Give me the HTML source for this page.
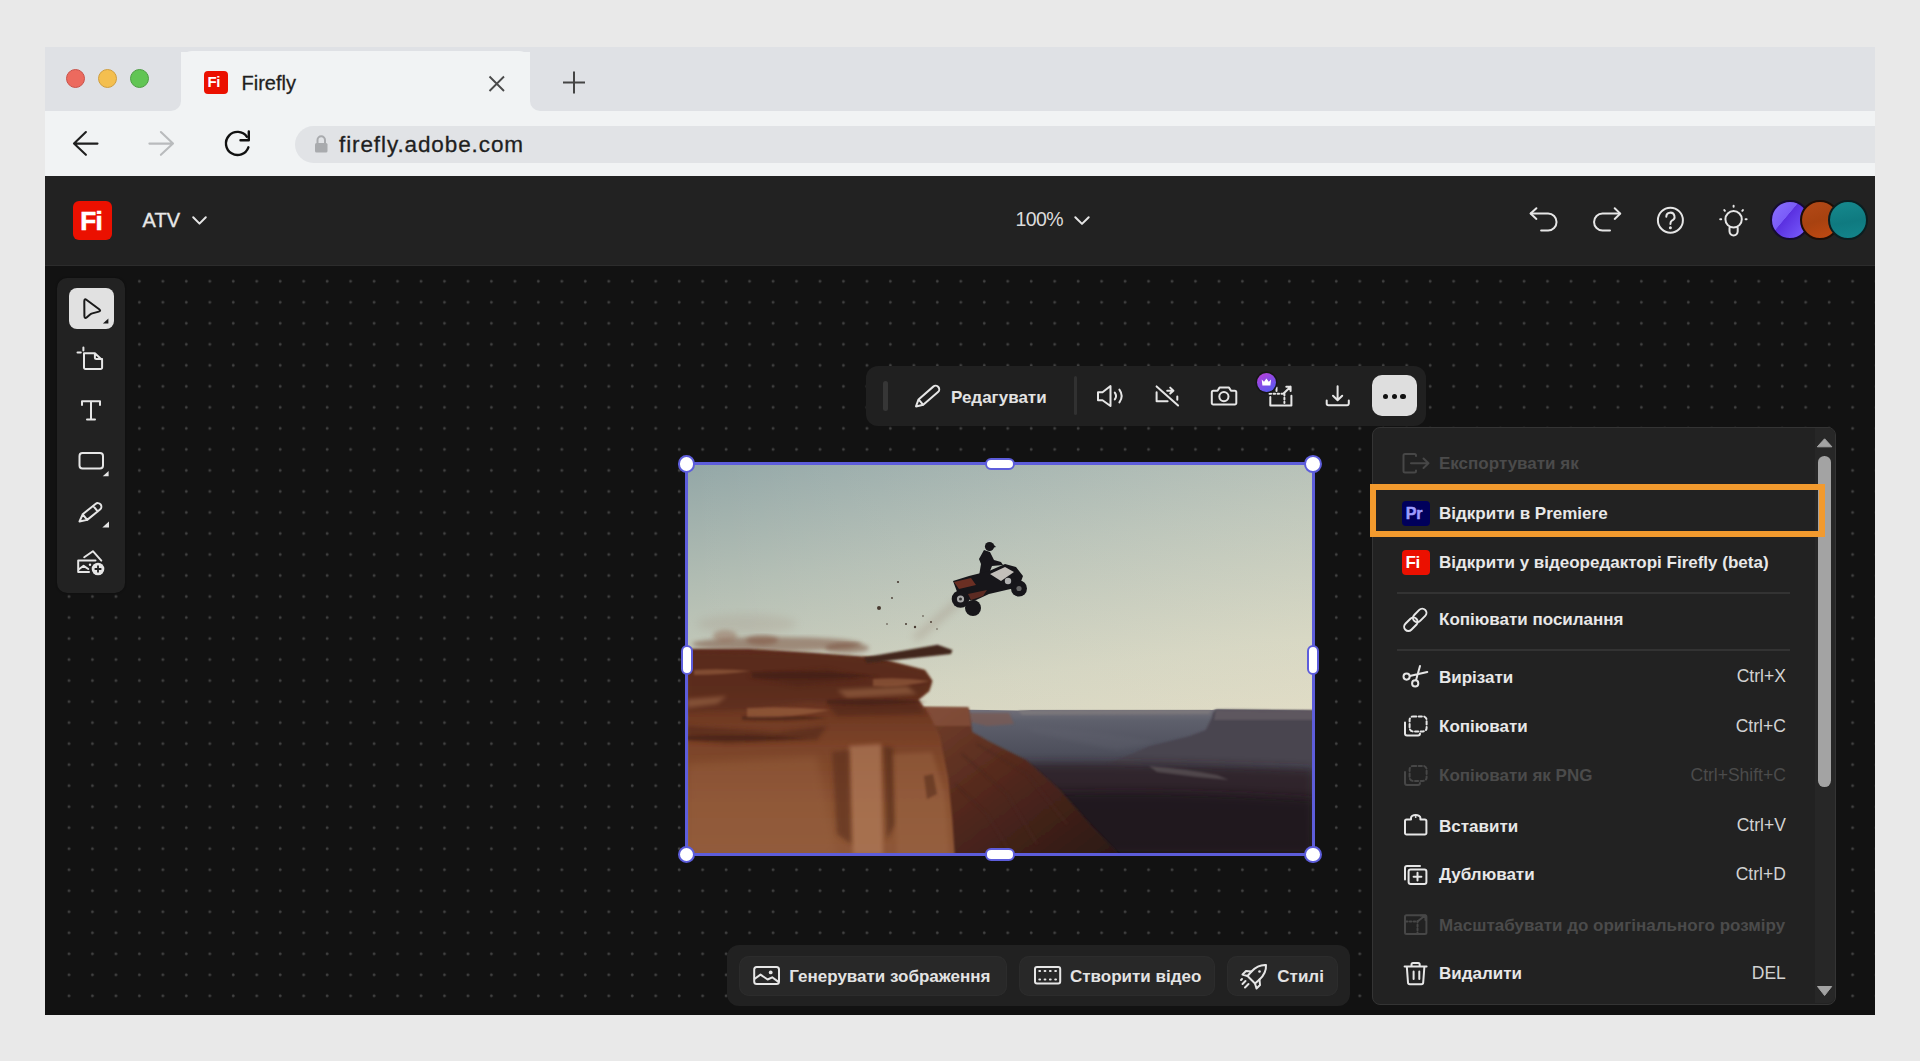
<!DOCTYPE html>
<html><head><meta charset="utf-8">
<style>
*{box-sizing:border-box;margin:0;padding:0}
html,body{width:1920px;height:1061px;overflow:hidden;background:#e9e9e9;font-family:"Liberation Sans",sans-serif;position:relative}
.a{position:absolute}
.t{position:absolute;white-space:nowrap;line-height:1}
svg{position:absolute;overflow:visible}
#canvas{position:absolute;left:45px;top:265.5px;width:1830px;height:749.5px;background-color:#121212;
 background-image:radial-gradient(circle at 12px 10.5px,#484848 0,#3e3e3e 0.9px,rgba(18,18,18,0) 1.9px);
 background-size:23.47px 21.02px;background-position:-11.48px 4.8px}
.mi{position:absolute;left:1439px;font-size:17px;font-weight:bold;color:#e8e8e8;white-space:nowrap;line-height:1}
.sc{position:absolute;right:134.2px;font-size:17.5px;color:#d2d2d2;white-space:nowrap;line-height:1;text-align:right}
.dis{color:#4b4b4b}
.ic{stroke:#e6e6e6;fill:none;stroke-width:2;stroke-linecap:round;stroke-linejoin:round}
.icd{stroke:#474747;fill:none;stroke-width:2;stroke-linecap:round;stroke-linejoin:round}
</style></head>
<body>
<!-- browser tab strip -->
<div class="a" style="left:45px;top:47px;width:1830px;height:64px;background:#f1f3f4"></div>
<div class="a" style="left:45px;top:47px;width:135.5px;height:64px;background:#dfe1e5;border-bottom-right-radius:10px"></div>
<div class="a" style="left:529.5px;top:47px;width:1345.5px;height:64px;background:#dfe1e5;border-bottom-left-radius:10px"></div>
<div class="a" style="left:180.5px;top:47px;width:349px;height:5px;background:#dfe1e5"></div>
<div class="a" style="left:180.5px;top:50.5px;width:349px;height:61px;background:#f1f3f4;border-radius:11px 11px 0 0"></div>
<!-- traffic lights -->
<div class="a" style="left:66.3px;top:68.9px;width:19px;height:19px;border-radius:50%;background:#ec6a5e;border:1.5px solid #c9524a"></div>
<div class="a" style="left:98.1px;top:68.9px;width:19px;height:19px;border-radius:50%;background:#f4bf4f;border:1.5px solid #d09e3e"></div>
<div class="a" style="left:129.9px;top:68.9px;width:19px;height:19px;border-radius:50%;background:#61c554;border:1.5px solid #4e9e44"></div>
<!-- favicon -->
<div class="a" style="left:204px;top:70.5px;width:24px;height:23px;border-radius:4px;background:#eb1000"></div>
<div class="t" style="left:207.5px;top:74px;font-size:15px;font-weight:bold;color:#fff;letter-spacing:-0.5px">Fi</div>
<div class="t" style="left:241.5px;top:73.1px;font-size:20px;color:#1f1f1f;-webkit-text-stroke:0.3px #1f1f1f">Firefly</div>
<svg style="left:0;top:0" width="1" height="1"><path d="M489.5 76.5 L504 91 M504 76.5 L489.5 91" stroke="#4a4a4a" stroke-width="1.9" fill="none"/></svg>
<svg style="left:0;top:0" width="1" height="1"><path d="M574 71.5 V93.5 M563 82.5 H585" stroke="#444" stroke-width="2" fill="none"/></svg>
<!-- toolbar -->
<div class="a" style="left:45px;top:111px;width:1830px;height:65px;background:#f1f3f4"></div>
<div class="a" style="left:295.4px;top:125.5px;width:1579.6px;height:37.5px;background:#e1e3e6;border-radius:19px 0 0 19px"></div>
<svg style="left:0;top:0" width="1" height="1">
 <path d="M97.5 143.6 H74 M85.9 132 L74 143.6 L85.9 154.8" stroke="#1f1f1f" stroke-width="2.1" fill="none" stroke-linecap="round" stroke-linejoin="round"/>
 <path d="M149.4 143.6 H173 M160.9 132 L173 143.6 L160.9 154.8" stroke="#b9bbbd" stroke-width="2.1" fill="none" stroke-linecap="round" stroke-linejoin="round"/>
 <path d="M248.4 147.3 A11.55 11.55 0 1 1 246.9 136.7" stroke="#111" stroke-width="2.4" fill="none" stroke-linecap="round"/>
 <path d="M248.8 131.5 V140.2 H240.5" stroke="#111" stroke-width="2.4" fill="none" stroke-linecap="round" stroke-linejoin="round"/>
 <rect x="315" y="143" width="12.5" height="9.5" rx="1.5" fill="#a9abae"/>
 <path d="M317.5 143 V140 A3.75 3.75 0 0 1 325 140 V143" stroke="#a9abae" stroke-width="2" fill="none"/>
</svg>
<div class="t" style="left:339px;top:134.2px;font-size:22.5px;color:#1f1f1f;letter-spacing:0.9px;-webkit-text-stroke:0.3px #1f1f1f">firefly.adobe.com</div>
<!-- app header -->
<div class="a" style="left:45px;top:176px;width:1830px;height:89.5px;background:#222222"></div>
<div class="a" style="left:73px;top:201px;width:38.5px;height:39px;border-radius:6px;background:#eb1000"></div>
<div class="t" style="left:80.3px;top:207.6px;font-size:26px;font-weight:bold;color:#fff;letter-spacing:-0.8px;-webkit-text-stroke:0.6px #fff">Fi</div>
<div class="t" style="left:142.6px;top:209.5px;font-size:20px;color:#e8e8e8;-webkit-text-stroke:0.35px #e8e8e8">ATV</div>
<svg style="left:0;top:0" width="1" height="1">
 <path d="M193.2 217.2 L199.5 223.6 L205.8 217.2" class="ic" stroke-width="2.7"/>
 <path d="M1075.3 217.2 L1082 223.9 L1088.7 217.2" class="ic" stroke-width="2.7"/>
</svg>
<div class="t" style="left:1015.5px;top:210.3px;font-size:19.5px;color:#dcdcdc;letter-spacing:-0.6px">100%</div>
<!-- header right icons -->
<svg style="left:0;top:0" width="1" height="1">
 <path d="M1530.8 213.6 H1548.1 A8.45 8.45 0 0 1 1548.1 230.5 H1541.1" class="ic" stroke-width="2.7"/>
 <path d="M1536.4 208.2 L1530.6 213.6 L1536.4 218.9" class="ic" stroke-width="2.7"/>
 <path d="M1619.8 213.6 H1602.5 A8.45 8.45 0 0 0 1602.5 230.5 H1610" class="ic" stroke-width="2.7"/>
 <path d="M1614.7 208.2 L1620.3 213.6 L1614.7 218.9" class="ic" stroke-width="2.7"/>
 <circle cx="1670.4" cy="220.2" r="12.5" class="ic" stroke-width="2.6"/>
 <path d="M1666.3 216.8 A4.1 4.1 0 1 1 1671.8 220.6 Q1670.4 221.5 1670.4 224" class="ic" stroke-width="2.5"/>
 <circle cx="1670.4" cy="227.8" r="1.5" fill="#e6e6e6"/>
 <circle cx="1733.6" cy="219.3" r="8.2" class="ic" stroke-width="2.6"/>
 <path d="M1729.5 227.8 V231.3 A4.1 4.1 0 0 0 1737.7 231.3 V227.8" class="ic" stroke-width="2.6"/>
 <path d="M1733.6 205.8 V206.8 M1724.3 210.1 L1724.9 210.8 M1742.9 210.1 L1742.3 210.8 M1720.2 219.3 H1721.2 M1746.6 219.3 H1745.6" class="ic" stroke-width="2.8"/>
</svg>
<!-- avatars -->
<div class="a" style="left:1770px;top:200px;width:40px;height:40px;border-radius:50%;background:linear-gradient(130deg,#8a70ff 0%,#7a5cf8 40%,#5a30e0 41%,#6a48f0 70%,#7f62ff 100%);border:2px solid #150c30"></div>
<div class="a" style="left:1800px;top:200px;width:40px;height:40px;border-radius:50%;background:linear-gradient(160deg,#b44a18,#a84210 50%,#c24a12);border:2px solid #1e0e06"></div>
<div class="a" style="left:1828px;top:200px;width:40px;height:40px;border-radius:50%;background:linear-gradient(170deg,#168a8e 0%,#0f7a80 55%,#13868c 100%);border:2px solid #0b1e20"></div>
<!-- canvas -->
<div id="canvas"></div>
<div class="a" style="left:45px;top:265.5px;width:3px;height:749.5px;background:#121212"></div>
<div class="a" style="left:45px;top:265px;width:1830px;height:1px;background:#2c2c2c"></div>
<div class="a" style="left:45px;top:1010px;width:1830px;height:5px;background:#0f0f0f"></div>
<!-- left toolbar -->
<div class="a" style="left:57.2px;top:278.3px;width:68px;height:314.4px;background:#222222;border-radius:10px;box-shadow:0 0 2px #0c0c0c"></div>
<div class="a" style="left:68.5px;top:288px;width:45px;height:40.7px;background:#e1e1e1;border-radius:8px"></div>
<svg style="left:0;top:0" width="1" height="1">
 <path d="M84.3 301.2 Q84.3 298.3 86.7 300 L99.2 309.3 Q101.3 310.9 98.8 311.6 L92.3 313.4 Q90.9 313.8 89.8 314.7 L86.9 317.2 Q84.5 319.2 84.4 316 Z" stroke="#1a1a1a" stroke-width="2" fill="none" stroke-linejoin="round"/>
 <path d="M102.9 323.6 L108.4 318.5 V323.6 Z" fill="#1a1a1a"/>
 <path d="M83.4 347.4 V350.6 M77.5 352.5 H80.8" class="ic" stroke-width="1.9"/>
 <path d="M84 353.3 H94.9 L102.1 359.9 V367.6 A1.5 1.5 0 0 1 100.6 369.1 H85.5 A1.5 1.5 0 0 1 84 367.6 Z M94.9 353.3 V357.6 A1.5 1.5 0 0 0 96.4 359.1 H102.1" class="ic" stroke-width="1.9"/>
 <path d="M82 404.9 V401.2 H100 V404.9 M91 401.2 V419.5 M87 419.5 H95" class="ic" stroke-width="1.9"/>
 <rect x="79.5" y="453" width="23.5" height="15.5" rx="3" class="ic" stroke-width="1.9"/>
 <path d="M102.7 476.2 L108.6 471.1 V476.2 Z" fill="#e6e6e6"/>
 <g transform="translate(79.5 521.5) rotate(-39)">
  <path d="M0 0 L7 -3.6 H23.5 A3.6 3.6 0 0 1 23.5 3.6 H7 Z M7 -3.6 V3.6 M20.5 -3.6 V3.6" class="ic" stroke-width="1.9"/>
 </g>
 <path d="M102.3 527.4 L109 521.4 V527.4 Z" fill="#e6e6e6"/>
 <path d="M84.2 557.3 L92.9 551.2 L101.3 560.6" class="ic" stroke-width="1.9"/>
 <path d="M95.5 560.6 H78.2 V571.9 H89" class="ic" stroke-width="1.9"/>
 <path d="M78.9 569.2 L83.6 565.8 L88.3 569" class="ic" stroke-width="1.9"/>
 <circle cx="90" cy="564.7" r="1.2" fill="#e6e6e6"/>
 <circle cx="98" cy="569" r="6.3" fill="#e6e6e6"/>
 <path d="M98 565.6 V572.4 M94.6 569 H101.4" stroke="#222" stroke-width="1.8"/>
</svg>
<!-- photo -->
<svg style="left:686.6px;top:464px;overflow:hidden" width="626.4" height="390.5" viewBox="0 0 626.4 390.5" preserveAspectRatio="none">
 <defs>
  <linearGradient id="sky" x1="0" y1="0" x2="0.2" y2="1">
   <stop offset="0" stop-color="#93a7a7"/>
   <stop offset="0.3" stop-color="#b2bdb3"/>
   <stop offset="0.62" stop-color="#d0d1bd"/>
   <stop offset="0.9" stop-color="#e0d9c0"/>
   <stop offset="1" stop-color="#e4d0b0"/>
  </linearGradient>
  <linearGradient id="skyR" x1="0" y1="0" x2="1" y2="0">
   <stop offset="0" stop-color="#fff" stop-opacity="0"/>
   <stop offset="1" stop-color="#f4f0dc" stop-opacity="0.22"/>
  </linearGradient>
  <linearGradient id="cliff" x1="0" y1="0" x2="0" y2="1">
   <stop offset="0" stop-color="#5e2c1a"/>
   <stop offset="0.2" stop-color="#64301e"/>
   <stop offset="0.45" stop-color="#7a4228"/>
   <stop offset="0.75" stop-color="#8a5232"/>
   <stop offset="1" stop-color="#8e5838"/>
  </linearGradient>
  <linearGradient id="dist" x1="0" y1="0" x2="0" y2="1">
   <stop offset="0" stop-color="#74717a"/>
   <stop offset="0.08" stop-color="#5e606c"/>
   <stop offset="0.35" stop-color="#4a4b58"/>
   <stop offset="0.6" stop-color="#3c3540"/>
   <stop offset="1" stop-color="#2f2322"/>
  </linearGradient>
  <linearGradient id="slope" x1="0" y1="0" x2="1" y2="1">
   <stop offset="0" stop-color="#74402c"/>
   <stop offset="0.45" stop-color="#52281c"/>
   <stop offset="1" stop-color="#2a1816"/>
  </linearGradient>
  <filter id="b1" x="-10%" y="-10%" width="120%" height="120%"><feGaussianBlur stdDeviation="1"/></filter>
  <filter id="b2" x="-20%" y="-20%" width="140%" height="140%"><feGaussianBlur stdDeviation="2.2"/></filter>
  <filter id="b3" x="-30%" y="-30%" width="160%" height="160%"><feGaussianBlur stdDeviation="4"/></filter>
 </defs>
 <rect x="0" y="0" width="626.4" height="391" fill="url(#sky)"/>
 <rect x="0" y="0" width="626.4" height="250" fill="url(#skyR)"/>
 <!-- distant range + valley -->
 <path d="M236 245 L331 246.5 L345 246 L524.7 246 L528.7 245.5 L626.4 246.5 V391 H236 Z" fill="url(#dist)"/>
 <path d="M331 246.5 L524.7 246 L522 250 L335 251 Z" fill="#85807f" opacity="0.55" filter="url(#b1)"/>
 <path d="M524.7 254 Q526 246 530 245.5 L626.4 246.5 V300 L420 300 L462.8 282 L502.7 272 L518.7 266 Z" fill="#4a4550" filter="url(#b1)"/>
 <path d="M528.7 246 L626.4 246.5 V256 L527 256 Z" fill="#675f66" opacity="0.7" filter="url(#b1)"/>
 <path d="M340 262 Q420 268 470 278 L430 286 Q380 276 345 268 Z" fill="#62646f" opacity="0.3" filter="url(#b2)"/>
 <path d="M290 300 Q420 296 626.4 305 V391 H290 Z" fill="#2a1e20" opacity="0.75" filter="url(#b3)"/>
 <path d="M462 302 Q500 305 530 311 L542 316 Q505 313 470 308 Z" fill="#7e7878" opacity="0.4" filter="url(#b1)"/>
 <path d="M340 330 Q480 325 626.4 335 V391 H340 Z" fill="#1e161a" opacity="0.75" filter="url(#b3)"/>
 <!-- second mesa -->
 <path d="M281 249 L322 249 L327 260 L300 262 L283 258 Z" fill="#7a5a52" opacity="0.75" filter="url(#b1)"/>
 <!-- near mesa & slope -->
 <path d="M236 243 L281.4 243.4 L285.3 267.9 L303 278 L339 296 L373 326 L403 360 L433 391 H236 Z" fill="url(#slope)" filter="url(#b1)"/>
 <path d="M238 243 L281.4 243.4 L284 262 L240 262 Z" fill="#8a5440" opacity="0.65" filter="url(#b1)"/>
 <g stroke="#4a2820" stroke-width="2.5" opacity="0.45" fill="none" filter="url(#b1)">
  <path d="M275 290 L320 330 L350 380"/><path d="M268 320 L300 350 L325 391"/><path d="M290 280 L340 310 L380 360"/>
 </g>
 <!-- dust haze -->
 <ellipse cx="90" cy="180" rx="85" ry="7" fill="#6e3e2a" opacity="0.45" filter="url(#b2)"/>
 <ellipse cx="38" cy="172" rx="12" ry="6" fill="#8a5a44" opacity="0.4" filter="url(#b2)"/>
 <ellipse cx="75" cy="176" rx="16" ry="5" fill="#7a4a34" opacity="0.45" filter="url(#b2)"/>
 <ellipse cx="160" cy="184" rx="22" ry="5" fill="#6a3a28" opacity="0.45" filter="url(#b2)"/>
 <ellipse cx="60" cy="160" rx="50" ry="10" fill="#9a8070" opacity="0.18" filter="url(#b3)"/>
 <!-- cliff -->
 <path d="M0 184 L3.6 185 L62.7 185 L126 189 L189.4 193.4 L237.9 206 L245.4 216.7 L242.2 227.2 L231.6 235.7 L242 250 L252.7 271.5 L261.2 313.8 L265.4 356 L267.7 391 H0 Z" fill="url(#cliff)" filter="url(#b1)"/>
 <path d="M0 186 L126 190 L189 195 L238 208 L244 220 L232 234 L180 242 L120 238 L60 246 L0 248 Z" fill="#552a1a" opacity="0.5" filter="url(#b2)"/>
 <g fill="#4a2418" opacity="0.5" filter="url(#b2)">
  <path d="M60 212 L140 205 L180 215 L110 222 Z"/>
  <path d="M140 240 L230 236 L238 250 L150 252 Z"/>
  <path d="M0 262 L90 268 L140 262 L130 276 L40 280 L0 276 Z"/>
 </g>
 <g fill="#b07a54" opacity="0.45" filter="url(#b2)">
  <path d="M0 235 L40 232 L30 240 L0 244 Z"/>
  <path d="M150 226 L220 222 L230 230 L160 234 Z"/>
 </g>
 <g fill="#3e1c12" opacity="0.5" filter="url(#b1)">
  <path d="M65 208 Q130 206 193 212 Q130 216 65 214 Z"/>
  <path d="M140 236 Q190 233 240 238 Q190 242 140 240 Z"/>
  <path d="M55 252 Q100 250 140 254 Q100 258 55 256 Z"/>
  <path d="M0 272 Q60 270 120 274 Q60 278 0 276 Z"/>
 </g>
 <g fill="#b0744e" opacity="0.45" filter="url(#b1)">
  <path d="M7 206 Q35 204 64 207 Q35 211 7 211 Z"/>
  <path d="M186 215 Q215 213 243 217 Q215 224 186 222 Z"/>
  <path d="M60 244 Q100 242 143 246 Q100 255 60 253 Z"/>
 </g>
 <path d="M0 300 L130 292 L150 391 H0 Z" fill="#9a6442" opacity="0.4" filter="url(#b3)"/>
 <path d="M162 282 L194 280 L196 391 H166 Z" fill="#b88260" opacity="0.6" filter="url(#b2)"/>
 <path d="M145 288 L162 286 L164 380 L150 370 Z" fill="#5a2e1e" opacity="0.6" filter="url(#b2)"/>
 <path d="M197 282 L206 284 L208 360 L200 376 Z" fill="#4e2818" opacity="0.55" filter="url(#b2)"/>
 <path d="M206 290 L245 288 L258 330 L262 391 H210 Z" fill="#a06a48" opacity="0.4" filter="url(#b2)"/>
 <path d="M237 312 L246 310 L250 330 L240 335 Z" fill="#4e2818" opacity="0.5" filter="url(#b1)"/>
 <!-- ramp -->
 <path d="M176.7 193.4 L250.6 180.8 L265.4 186 L264 190 L180 199 Z" fill="#43261d" filter="url(#b1)"/>
 <!-- debris -->
 <g fill="#3a2a22" opacity="0.9">
  <circle cx="192" cy="144" r="2"/><circle cx="211" cy="118" r="1.1"/><circle cx="205" cy="134" r="0.9"/><circle cx="219" cy="160" r="1"/><circle cx="228" cy="163" r="1.2"/><circle cx="244" cy="158" r="1"/><circle cx="236" cy="152" r="0.8"/><circle cx="200" cy="160" r="0.8"/><circle cx="250" cy="165" r="0.7"/>
 </g>
 <path d="M228 175 Q248 158 272 137" stroke="#8a7060" stroke-width="6" opacity="0.3" fill="none" filter="url(#b3)"/>
 <!-- ATV -->
 <g fill="#17161a">
  <circle cx="302.5" cy="82.5" r="4.6"/>
  <path d="M306 80 L309 83 L305 84 Z"/>
  <path d="M297 86 L303 88 L307 96 L314 98 L316 101 L305 102 L301 112 L297 114 L292 112 L294 100 L292 95 Z"/>
  <path d="M266 117 L282 112 L302 107 L318 100 L329 103 L336 112 L332 123 L302 130 L287 137 L272 133 Z"/>
  <circle cx="273.5" cy="135" r="8.8"/>
  <circle cx="286" cy="144" r="8"/>
  <circle cx="321" cy="117" r="8"/>
  <circle cx="332" cy="124.5" r="8"/>
 </g>
 <path d="M303 110 L318 103 L327 108 L314 117 Z" fill="#d6d2cc" opacity="0.9"/>
 <path d="M267 118 L284 114 L289 121 L272 125 Z" fill="#7a3426" opacity="0.85"/>
 <path d="M281 130 L300 126 L296 132 L284 136 Z" fill="#8a3a2a" opacity="0.6"/>
 <circle cx="273.5" cy="135" r="3.6" fill="#a8a8a8"/>
 <circle cx="273.5" cy="135" r="1.5" fill="#333"/>
 <circle cx="321" cy="117" r="3.2" fill="#b0b0b0"/>
 <circle cx="332" cy="124.5" r="2.6" fill="#666"/>
</svg>
<!-- selection frame -->
<div class="a" style="left:685px;top:462.4px;width:629.6px;height:393.7px;border:3.2px solid #5d5ddb"></div>
<div class="a" style="left:677.7px;top:455px;width:17.8px;height:17.8px;border-radius:50%;background:#fff;border:2.8px solid #5d5ddb"></div>
<div class="a" style="left:1304.1px;top:455px;width:17.8px;height:17.8px;border-radius:50%;background:#fff;border:2.8px solid #5d5ddb"></div>
<div class="a" style="left:677.7px;top:845.6px;width:17.8px;height:17.8px;border-radius:50%;background:#fff;border:2.8px solid #5d5ddb"></div>
<div class="a" style="left:1304.1px;top:845.6px;width:17.8px;height:17.8px;border-radius:50%;background:#fff;border:2.8px solid #5d5ddb"></div>
<div class="a" style="left:984.9px;top:457.9px;width:30.3px;height:12.2px;border-radius:6.1px;background:#fff;border:2.8px solid #5d5ddb"></div>
<div class="a" style="left:984.9px;top:848.4px;width:30.3px;height:12.2px;border-radius:6.1px;background:#fff;border:2.8px solid #5d5ddb"></div>
<div class="a" style="left:680.5px;top:644.8px;width:12.2px;height:30.3px;border-radius:6.1px;background:#fff;border:2.8px solid #5d5ddb"></div>
<div class="a" style="left:1306.9px;top:644.8px;width:12.2px;height:30.3px;border-radius:6.1px;background:#fff;border:2.8px solid #5d5ddb"></div>
<!-- floating toolbar -->
<div class="a" style="left:865.8px;top:366.3px;width:560px;height:59.8px;background:#202020;border-radius:12px"></div>
<div class="a" style="left:882.5px;top:381px;width:5px;height:30px;background:#363636;border-radius:2.5px"></div>
<div class="a" style="left:1073.6px;top:376.2px;width:3px;height:39px;background:#313131;border-radius:1.5px"></div>
<div class="t" style="left:951px;top:388.6px;font-size:17px;font-weight:bold;color:#e3e3e3">Редагувати</div>
<svg style="left:0;top:0" width="1" height="1">
 <g transform="translate(916 406.4) rotate(-41)">
  <path d="M0 0 L6.5 -3.6 H26 A3.6 3.6 0 0 1 26 3.6 H6.5 Z M6.5 -3.6 V3.6" class="ic" stroke-width="1.9"/>
 </g>
 <path d="M1098 392.3 H1102.5 L1110.5 386 V406 L1102.5 400.3 H1098 Z" class="ic" stroke-width="1.9"/>
 <path d="M1114.8 392.6 Q1117.3 396 1114.8 399.4 M1119.4 389.6 Q1124 396 1119.4 402.4" class="ic" stroke-width="1.9"/>
 <path d="M1156.6 386.4 L1178.1 405.5 M1156.6 392.3 V401.3 H1167.6 M1167.2 390.7 H1173.4 M1170.2 387.6 L1173.4 390.7 L1170.2 393.6 M1177.3 396.4 V399.7" class="ic" stroke-width="1.9"/>
 <path d="M1211.8 392.2 A1.5 1.5 0 0 1 1213.3 390.7 H1217.5 L1219.5 387.6 H1229 L1231 390.7 H1234.8 A1.5 1.5 0 0 1 1236.3 392.2 V403 A1.5 1.5 0 0 1 1234.8 404.5 H1213.3 A1.5 1.5 0 0 1 1211.8 403 Z" class="ic" stroke-width="1.9"/>
 <circle cx="1223.9" cy="396.6" r="4.6" class="ic" stroke-width="1.9"/>
 <path d="M1270.3 397 V405.5 H1291.4 V395.8" class="ic" stroke-width="1.9"/>
 <path d="M1269.5 393.8 H1282.5 M1284.4 393.8 V403" class="ic" stroke-width="1.9" stroke-dasharray="1.6 2.4"/>
 <path d="M1283.8 393.2 L1290.6 386.8 M1286.3 386.8 H1290.6 V391" class="ic" stroke-width="1.9"/>
 <path d="M1276.5 387.5 V391" class="ic" stroke-width="1.9"/>
 <path d="M1326.7 400.4 V403.5 A1.7 1.7 0 0 0 1328.4 405.2 H1347.1 A1.7 1.7 0 0 0 1348.8 403.5 V400.4 M1337.6 386.3 V400 M1333 395.8 L1337.6 400.2 L1342.2 395.8" class="ic" stroke-width="1.9"/>
</svg>
<div class="a" style="left:1256.6px;top:372.7px;width:19.6px;height:19.6px;border-radius:50%;background:linear-gradient(150deg,#c03fd8 0%,#8a4be6 45%,#4a5ef2 100%);box-shadow:0 0 0 1.5px #161616"></div>
<svg style="left:0;top:0" width="1" height="1">
 <path d="M1261.7 379.6 L1264 381.8 L1266.4 378.6 L1268.8 381.8 L1271.1 379.6 L1270.4 385.6 H1262.4 Z" fill="#fff"/>
</svg>
<div class="a" style="left:1371.7px;top:375.4px;width:45.3px;height:41px;background:#dedede;border-radius:10px"></div>
<div class="a" style="left:1383.2px;top:393.5px;width:5.2px;height:5.2px;border-radius:50%;background:#111"></div>
<div class="a" style="left:1391.8px;top:393.5px;width:5.2px;height:5.2px;border-radius:50%;background:#111"></div>
<div class="a" style="left:1400.4px;top:393.5px;width:5.2px;height:5.2px;border-radius:50%;background:#111"></div>
<!-- context menu -->
<div class="a" style="left:1372.3px;top:427.1px;width:463.8px;height:577.5px;background:#222222;border:1px solid #343434;border-radius:8px"></div>
<div class="a" style="left:1814.8px;top:428.2px;width:20.2px;height:575.3px;background:#272727;border-radius:0 7px 7px 0"></div>
<svg style="left:0;top:0" width="1" height="1">
 <path d="M1817.3 446.8 L1824.6 438.8 L1831.9 446.8 Z" fill="#a3a3a3" stroke="#a3a3a3" stroke-width="1" stroke-linejoin="round"/>
 <path d="M1817.5 986.5 L1824.6 995.5 L1831.7 986.5 Z" fill="#a3a3a3" stroke="#a3a3a3" stroke-width="1" stroke-linejoin="round"/>
</svg>
<div class="a" style="left:1818.2px;top:455.8px;width:12.8px;height:331.6px;background:#a3a3a3;border-radius:6.4px"></div>
<div class="a" style="left:1397px;top:592px;width:393px;height:2px;background:#333"></div>
<div class="a" style="left:1397px;top:648.7px;width:393px;height:2px;background:#333"></div>
<div class="mi dis" style="top:455.4px">Експортувати як</div>
<div class="mi" style="top:505.1px">Відкрити в Premiere</div>
<div class="mi" style="top:553.6px">Відкрити у відеоредакторі Firefly (beta)</div>
<div class="mi" style="top:611.1px">Копіювати посилання</div>
<div class="mi" style="top:668.6px">Вирізати</div>
<div class="sc" style="top:668.2px">Ctrl+X</div>
<div class="mi" style="top:718.1px">Копіювати</div>
<div class="sc" style="top:717.7px">Ctrl+C</div>
<div class="mi dis" style="top:767.3px">Копіювати як PNG</div>
<div class="sc dis" style="top:766.9px">Ctrl+Shift+C</div>
<div class="mi" style="top:817.6px">Вставити</div>
<div class="sc" style="top:817.2px">Ctrl+V</div>
<div class="mi" style="top:866.3px">Дублювати</div>
<div class="sc" style="top:865.9px">Ctrl+D</div>
<div class="mi dis" style="top:917.2px">Масштабувати до оригінального розміру</div>
<div class="mi" style="top:965.4px">Видалити</div>
<div class="sc" style="top:965.0px">DEL</div>
<div class="a" style="left:1370.2px;top:483.8px;width:455.1px;height:53.1px;border:6.6px solid #f29a2e"></div>
<div class="a" style="left:1402px;top:500.5px;width:27.6px;height:25.3px;background:#00005b;border-radius:4px"></div>
<div class="t" style="left:1405.8px;top:505.5px;font-size:16px;font-weight:bold;color:#9d9dff;letter-spacing:-0.2px;-webkit-text-stroke:0.5px #9d9dff">Pr</div>
<div class="a" style="left:1401.6px;top:549.9px;width:28.2px;height:24.7px;background:#eb1000;border-radius:4px"></div>
<div class="t" style="left:1405.6px;top:554px;font-size:17px;font-weight:bold;color:#fff;letter-spacing:-0.6px">Fi</div>
<svg style="left:0;top:0" width="1" height="1">
 <path d="M1416 456 V455.5 A1.5 1.5 0 0 0 1414.5 454 H1405 A1.5 1.5 0 0 0 1403.5 455.5 V471 A1.5 1.5 0 0 0 1405 472.5 H1414.5 A1.5 1.5 0 0 0 1416 471 V470.5 M1411 463.3 H1428.5 M1423.5 458.5 L1428.5 463.3 L1423.5 468" class="icd" stroke-width="1.9"/>
 <g transform="translate(1415.3 619.8) rotate(-45)" class="ic" stroke-width="1.9"><rect x="-14" y="-4.2" width="15.5" height="8.4" rx="4.2"/><rect x="-1.5" y="-4.2" width="15.5" height="8.4" rx="4.2"/></g>
 <circle cx="1406.6" cy="676.6" r="3.1" class="ic" stroke-width="1.9"/>
 <circle cx="1415.2" cy="683.4" r="3.1" class="ic" stroke-width="1.9"/>
 <path d="M1409.7 675.9 L1427.3 672 M1416 680.2 L1420 666" class="ic" stroke-width="1.9"/>
 <rect x="1409.6" y="716.4" width="17" height="15" rx="3.5" class="ic" stroke-width="1.9" stroke-dasharray="3.2 2.4"/>
 <path d="M1405 722.5 V733.5 A2 2 0 0 0 1407 735.5 H1418 A2 2 0 0 0 1420 733.5" class="ic" stroke-width="1.9"/>
 <rect x="1409.6" y="765.9" width="17" height="15" rx="3.5" class="icd" stroke-width="1.9" stroke-dasharray="3.2 2.4"/>
 <path d="M1405 772 V783 A2 2 0 0 0 1407 785 H1418 A2 2 0 0 0 1420 783" class="icd" stroke-width="1.9"/>
 <path d="M1411 819.4 H1406.6 A1.6 1.6 0 0 0 1405 821 V833 A1.6 1.6 0 0 0 1406.6 834.6 H1424.8 A1.6 1.6 0 0 0 1426.4 833 V821 A1.6 1.6 0 0 0 1424.8 819.4 H1420.4 V818 A4.7 3 0 0 0 1411 818 Z" class="ic" stroke-width="1.9"/>
 <circle cx="1415.7" cy="817" r="0.9" fill="#e6e6e6"/>
 <path d="M1405 879.4 V868 A2 2 0 0 1 1407 866 H1420" class="ic" stroke-width="1.9"/>
 <rect x="1408.6" y="869.6" width="17.8" height="14.3" rx="2" class="ic" stroke-width="1.9"/>
 <path d="M1417.5 872.8 V880.6 M1413.6 876.7 H1421.4" class="ic" stroke-width="1.9"/>
 <rect x="1405" y="915.3" width="21.4" height="18.7" rx="1.5" class="icd" stroke-width="1.9"/>
 <path d="M1406 921.5 H1417 M1417.5 921 V933 " class="icd" stroke-width="1.9" stroke-dasharray="1.6 2.2"/>
 <path d="M1417.5 921.5 L1425 915.5 M1420.5 915.5 H1425.5 V920" class="icd" stroke-width="1.9"/>
 <path d="M1404.6 966.5 H1426.6 M1411.5 966.5 V964.4 A1.5 1.5 0 0 1 1413 962.9 H1418.2 A1.5 1.5 0 0 1 1419.7 964.4 V966.5 M1406.8 966.5 L1408 982.5 A1.8 1.8 0 0 0 1409.8 984.2 H1421.4 A1.8 1.8 0 0 0 1423.2 982.5 L1424.4 966.5 M1413.6 971.5 V979 M1419.3 971.5 V979" class="ic" stroke-width="1.9"/>
</svg>
<!-- bottom bar -->
<div class="a" style="left:727.3px;top:945px;width:622.7px;height:60.7px;background:#212121;border-radius:12px"></div>
<div class="a" style="left:739.3px;top:955.7px;width:268px;height:40px;background:#282828;border-radius:10px;box-shadow:inset 0 0 0 1px #2c2c2c"></div>
<div class="a" style="left:1019.3px;top:955.7px;width:195.7px;height:40px;background:#282828;border-radius:10px;box-shadow:inset 0 0 0 1px #2c2c2c"></div>
<div class="a" style="left:1227.3px;top:955.7px;width:111px;height:40px;background:#282828;border-radius:10px;box-shadow:inset 0 0 0 1px #2c2c2c"></div>
<div class="t" style="left:789.3px;top:968.3px;font-size:17px;font-weight:bold;color:#e3e3e3">Генерувати зображення</div>
<div class="t" style="left:1070px;top:968.3px;font-size:17px;font-weight:bold;color:#e3e3e3">Створити відео</div>
<div class="t" style="left:1277.3px;top:968.3px;font-size:17px;font-weight:bold;color:#e3e3e3">Стилі</div>
<svg style="left:0;top:0" width="1" height="1">
 <rect x="754.2" y="967" width="24.8" height="17" rx="2.5" class="ic" stroke-width="1.9"/>
 <path d="M754.8 978.8 L760.5 974.6 L767.6 979.5 L772.2 977.3 L777.8 981.4" class="ic" stroke-width="1.9"/>
 <circle cx="770.7" cy="972.4" r="1.9" fill="#e6e6e6"/>
 <rect x="1035" y="967" width="25.2" height="16.5" rx="2" class="ic" stroke-width="1.9"/>
 <path d="M1039.3 971 H1056 M1039.3 979.6 H1056" class="ic" stroke-width="1.8" stroke-dasharray="0.8 4.5"/>
 <path d="M1266 965 Q1258 964.5 1251.5 971.5 L1247.5 976 L1255 983.5 L1259.5 979.5 Q1266.5 973 1266 965 Z" class="ic" stroke-width="1.8"/>
 <path d="M1251.5 971.5 L1246 971 L1242.5 974.5 L1247.5 976 M1259.5 979.5 L1260 985 L1256.5 988.5 L1255 983.5" class="ic" stroke-width="1.8"/>
 <circle cx="1259.5" cy="971.5" r="1.3" fill="#e6e6e6"/>
 <path d="M1245.5 981 L1242.5 984 M1248.5 984 L1245 987.5 M1242 979 L1241 980" class="ic" stroke-width="1.6"/>
</svg>
</body></html>
